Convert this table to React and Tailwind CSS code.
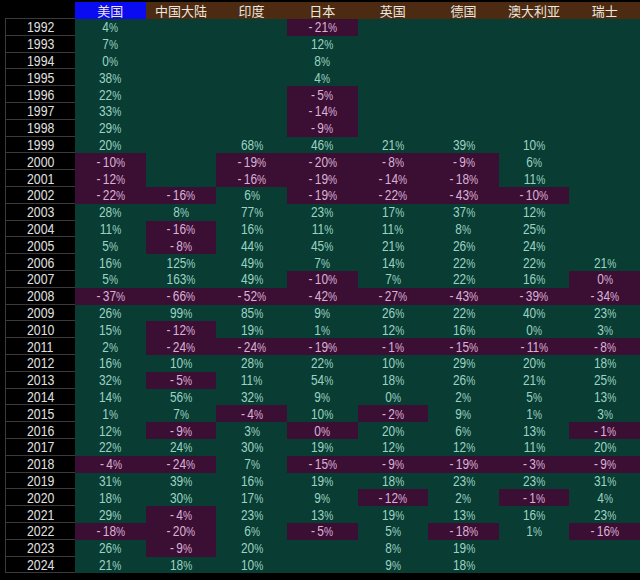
const COLS = ["美国", "中国大陆", "印度", "日本", "英国", "德国", "澳大利亚", "瑞士"]

// "" = no data, "n0" = zero shown on a negative cell
const ROWS = [
  [1992, "4", "", "", "-21", "", "", "", ""],
  [1993, "7", "", "", "12", "", "", "", ""],
  [1994, "0", "", "", "8", "", "", "", ""],
  [1995, "38", "", "", "4", "", "", "", ""],
  [1996, "22", "", "", "-5", "", "", "", ""],
  [1997, "33", "", "", "-14", "", "", "", ""],
  [1998, "29", "", "", "-9", "", "", "", ""],
  [1999, "20", "", "68", "46", "21", "39", "10", ""],
  [2000, "-10", "", "-19", "-20", "-8", "-9", "6", ""],
  [2001, "-12", "", "-16", "-19", "-14", "-18", "11", ""],
  [2002, "-22", "-16", "6", "-19", "-22", "-43", "-10", ""],
  [2003, "28", "8", "77", "23", "17", "37", "12", ""],
  [2004, "11", "-16", "16", "11", "11", "8", "25", ""],
  [2005, "5", "-8", "44", "45", "21", "26", "24", ""],
  [2006, "16", "125", "49", "7", "14", "22", "22", "21"],
  [2007, "5", "163", "49", "-10", "7", "22", "16", "n0"],
  [2008, "-37", "-66", "-52", "-42", "-27", "-43", "-39", "-34"],
  [2009, "26", "99", "85", "9", "26", "22", "40", "23"],
  [2010, "15", "-12", "19", "1", "12", "16", "0", "3"],
  [2011, "2", "-24", "-24", "-19", "-1", "-15", "-11", "-8"],
  [2012, "16", "10", "28", "22", "10", "29", "20", "18"],
  [2013, "32", "-5", "11", "54", "18", "26", "21", "25"],
  [2014, "14", "56", "32", "9", "0", "2", "5", "13"],
  [2015, "1", "7", "-4", "10", "-2", "9", "1", "3"],
  [2016, "12", "-9", "3", "n0", "20", "6", "13", "-1"],
  [2017, "22", "24", "30", "19", "12", "12", "11", "20"],
  [2018, "-4", "-24", "7", "-15", "-9", "-19", "-3", "-9"],
  [2019, "31", "39", "16", "19", "18", "23", "23", "31"],
  [2020, "18", "30", "17", "9", "-12", "2", "-1", "4"],
  [2021, "29", "-4", "23", "13", "19", "13", "16", "23"],
  [2022, "-18", "-20", "6", "-5", "5", "-18", "1", "-16"],
  [2023, "26", "-9", "20", "", "8", "19", "", ""],
  [2024, "21", "18", "10", "", "9", "18", "", ""],
]

function Cell({ value }) {
  if (!value) return <div className="bg-[#093c32]" />
  const neg = value.startsWith("-") || value === "n0"
  const text = value === "n0" ? "0" : value.replace("-", "-\u2009")
  return (
    <div
      className={`flex items-center justify-center ${
        neg ? "bg-[#3a0f33] text-[#dcb0d6]" : "bg-[#093c32] text-[#9ad3c3]"
      }`}
    >
      <span className="inline-block scale-x-[0.85]">
        {text}
        <span className="text-[12px] tracking-[-0.5px]">%</span>
      </span>
    </div>
  )
}

export default function App() {
  return (
    <div className="h-[580px] w-[640px] overflow-hidden bg-black pl-[5px] pt-[2px] font-['Liberation_Sans',sans-serif] text-[14px] leading-none">
      <div className="grid grid-cols-[70px_repeat(8,1fr)] grid-rows-[17px_repeat(33,16.8px)]">
        <div className="border-b border-[#3a3a3a]" />
        {COLS.map((name, i) => (
          <div
            key={name}
            className={`flex items-center justify-center font-['Noto_Sans_CJK_SC',sans-serif] text-[13px] text-[#ece6de] ${
              i === 0 ? "bg-[#0b0bf2]" : "bg-[#4c2b12]"
            }`}
          >
            {name}
          </div>
        ))}

        {ROWS.map(([year, ...vals]) => (
          <div key={year} className="contents">
            <div className="flex items-center justify-center border-b border-l border-[#3a3a3a] text-[15px] text-[#e0e0e0]">
              <span className="inline-block scale-x-[0.82]">{year}</span>
            </div>
            {vals.map((v, i) => (
              <Cell key={i} value={v} />
            ))}
          </div>
        ))}
      </div>
    </div>
  )
}
